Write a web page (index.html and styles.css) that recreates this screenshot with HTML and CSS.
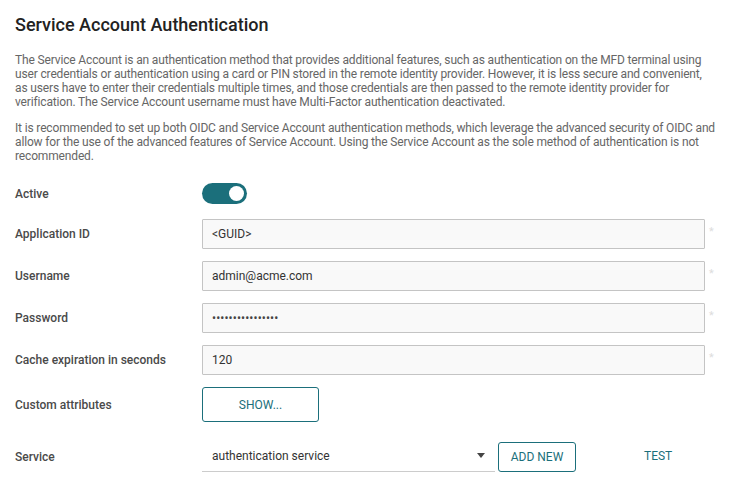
FILE: index.html
```html
<!DOCTYPE html>
<html>
<head>
<meta charset="utf-8">
<link rel="stylesheet" href="styles.css">
</head>
<body>
<div class="page">
  <h1 class="title">Service Account Authentication</h1>
  <p class="desc">The Service Account is an authentication method that provides additional features, such as authentication on the MFD terminal using user credentials or authentication using a card or PIN stored in the remote identity provider. However, it is less secure and convenient, as users have to enter their credentials multiple times, and those credentials are then passed to the remote identity provider for verification. The Service Account username must have Multi-Factor authentication deactivated.</p>
  <p class="desc">It is recommended to set up both OIDC and Service Account authentication methods, which leverage the advanced security of OIDC and allow for the use of the advanced features of Service Account. Using the Service Account as the sole method of authentication is not recommended.</p>

  <div class="form">
    <div class="row row-toggle">
      <div class="label">Active</div>
      <div class="field"><span class="toggle"><span class="knob"></span></span></div>
    </div>
    <div class="row row-input">
      <div class="label">Application ID</div>
      <div class="field"><div class="input">&lt;GUID&gt;</div><span class="req">*</span></div>
    </div>
    <div class="row row-input">
      <div class="label">Username</div>
      <div class="field"><div class="input">admin@acme.com</div><span class="req">*</span></div>
    </div>
    <div class="row row-input">
      <div class="label">Password</div>
      <div class="field"><div class="input pw">••••••••••••••••</div><span class="req">*</span></div>
    </div>
    <div class="row row-input">
      <div class="label">Cache expiration in seconds</div>
      <div class="field"><div class="input">120</div><span class="req">*</span></div>
    </div>
    <div class="row row-button">
      <div class="label">Custom attributes</div>
      <div class="field"><span class="btn btn-show">SHOW...</span></div>
    </div>
    <div class="row row-service">
      <div class="label">Service</div>
      <div class="field">
        <div class="select"><span>authentication service</span><span class="arrow"></span></div>
        <span class="btn btn-add">ADD NEW</span>
        <span class="btn-text">TEST</span>
      </div>
    </div>
  </div>
</div>
</body>
</html>
```
FILE: styles.css
```css
* { box-sizing: border-box; }
html, body { margin: 0; padding: 0; background: #fff; }
body { font-family: Roboto, "Liberation Sans", Arial, sans-serif; color: #333; }
.page { padding: 14px 15px 0 15px; width: 740px; }
.title { font-size: 18px; font-weight: 500; color: #222; margin: 0 0 17px 0; line-height: 22px; }
.desc { width: 701px; font-size: 12px; line-height: 14px; color: #666; margin: 0 0 12px 0; letter-spacing: -0.15px; }
.form { margin-top: 20px; }
.row { display: flex; align-items: center; }
.label { width: 187px; font-size: 12px; font-weight: 500; color: #4a4a4a; flex: none; }
.field { display: flex; align-items: center; flex: 1; }
.row-toggle { height: 21px; margin-bottom: 15px; }
.toggle { display: inline-flex; align-items: center; justify-content: flex-end; width: 45px; height: 21px; border-radius: 11px; background: #1b6f7b; padding: 0 3px; }
.knob { width: 15px; height: 15px; border-radius: 50%; background: #fff; }
.row-input { height: 30px; margin-bottom: 12px; }
.input { width: 503px; height: 30px; border: 1px solid #c4c4c4; background: #f9f9f9; border-radius: 1px; padding: 0 9px; display: flex; align-items: center; font-size: 12px; color: #333; }
.input.pw { font-size: 12px; letter-spacing: 0.1px; color: #444; }
.req { align-self: flex-start; margin: 6px 0 0 4px; font-size: 11px; color: #ddd; }
.row-button { height: 35px; margin-bottom: 20px; }
.btn { display: inline-flex; align-items: center; justify-content: center; border: 1px solid #1b6f7b; border-radius: 3px; font-size: 12px; color: #1b6f7b; background: #fff; }
.btn-show { width: 117px; height: 35px; }
.row-service { height: 30px; }
.select { width: 293px; height: 30px; border-bottom: 1px solid #ccc; display: flex; align-items: center; justify-content: space-between; padding: 0 10px 1px 10px; font-size: 12px; color: #333; }
.arrow { width: 0; height: 0; border-left: 4px solid transparent; border-right: 4px solid transparent; border-top: 5px solid #444; margin-top: -2px; }
.btn-add { width: 78px; height: 30px; margin-left: 3px; }
.btn-text { font-size: 12px; color: #1b6f7b; margin-left: 68px; margin-top: -2px; }
```
